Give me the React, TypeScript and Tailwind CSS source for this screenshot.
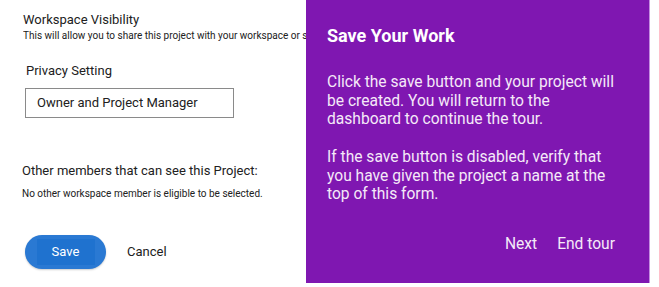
export default function App() {
  return (
    <div className="relative h-[287px] w-[659px] overflow-hidden bg-white font-['Roboto',sans-serif] text-[#212121]">
      <div className="flex flex-col pl-[23px] pt-[11px]">
        <h2 className="text-[13px] leading-[18px]">Workspace Visibility</h2>
        <p className="w-[283px] overflow-hidden whitespace-nowrap text-[10px] leading-[13px]">
          This will allow you to share this project with your workspace or select specific members
        </p>
        <label className="mt-[20px] ml-[3px] text-[13px] leading-[18px]">Privacy Setting</label>
        <div className="mt-[8px] ml-[2px] flex h-[30px] w-[209px] items-center border border-[#8a8a8a] px-[11px] text-[13px]">
          Owner and Project Manager
        </div>
        <h3 className="mt-[44px] -ml-[1px] text-[13px] leading-[18px]">
          Other members that can see this Project:
        </h3>
        <p className="mt-[7px] -ml-[1px] text-[10px] leading-[13px]">
          No other workspace member is eligible to be selected.
        </p>
        <div className="mt-[35px] ml-[2px] flex items-center gap-[21px]">
          <button className="flex h-[34px] w-[81px] items-center justify-center rounded-full bg-[#2a79d3] shadow-[0_1px_2px_rgba(0,0,0,0.2)]">
            <span className="flex h-[26px] w-[58px] items-center justify-center bg-[#1f72cf] text-[13px] text-white">
              Save
            </span>
          </button>
          <button className="text-[13px]">Cancel</button>
        </div>
      </div>

      <div className="absolute top-0 left-[306px] flex h-[283px] w-[344px] flex-col border-r border-[#c48ee0] bg-[#7f17b1] pl-[21px] pr-[26px] pt-[26px] text-[#f5e9f8]">
        <h1 className="text-[18px] font-bold leading-[20px] text-white">Save Your Work</h1>
        <p className="mt-[27px] text-[15.6px] leading-[18.5px]">
          Click the save button and your project will be created. You will return to the dashboard to continue the tour.
        </p>
        <p className="mt-[19.5px] text-[15.6px] leading-[18.5px]">
          If the save button is disabled, verify that you have given the project a name at the top of this form.
        </p>
        <div className="mt-[31px] flex justify-end gap-[20px] pr-[8px] text-[15.6px] leading-[18px]">
          <button>Next</button>
          <button>End tour</button>
        </div>
      </div>
    </div>
  );
}
